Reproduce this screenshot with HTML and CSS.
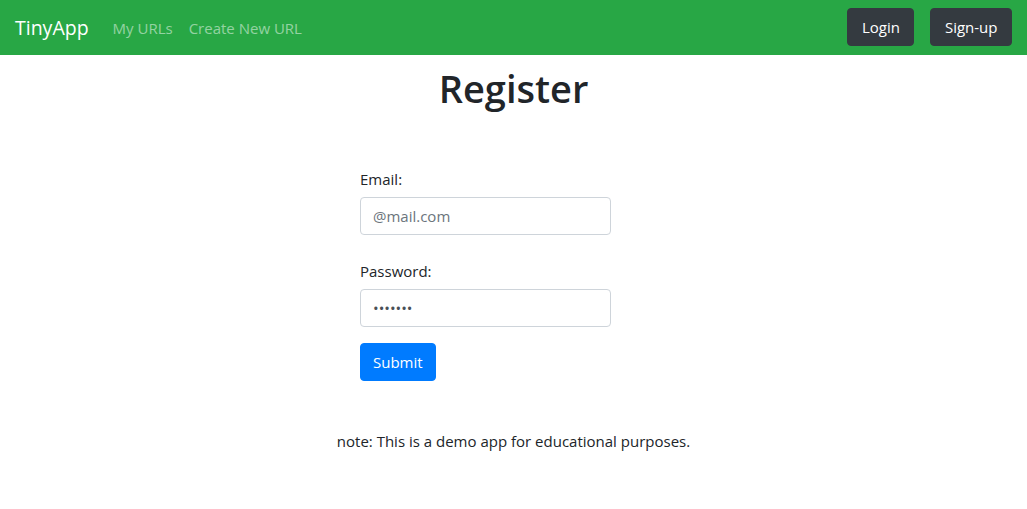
FILE: index.html
```html
<!DOCTYPE html>
<html lang="en">
<head>
<meta charset="utf-8">
<title>TinyApp - Register</title>
<link rel="stylesheet" href="styles.css">
</head>
<body>
<nav class="navbar">
  <div class="nav-left">
    <a class="brand" href="#">TinyApp</a>
    <a class="nav-link" href="#">My URLs</a>
    <a class="nav-link" href="#">Create New URL</a>
  </div>
  <div class="nav-right">
    <button class="btn btn-dark btn-nav">Login</button>
    <button class="btn btn-dark btn-nav">Sign-up</button>
  </div>
</nav>
<main class="main">
  <h1 class="title">Register</h1>
  <div class="form-wrap">
    <form class="form">
      <div class="form-group">
        <label class="label" for="email">Email:</label>
        <input class="input" id="email" type="email" placeholder="@mail.com">
      </div>
      <div class="form-group">
        <label class="label" for="password">Password:</label>
        <input class="input" id="password" type="password" value="1234567">
      </div>
      <button class="btn btn-primary" type="button">Submit</button>
    </form>
  </div>
  <p class="note">note: This is a demo app for educational purposes.</p>
</main>
</body>
</html>
```
FILE: styles.css
```css
* { box-sizing: border-box; }
html, body { margin: 0; padding: 0; }
body {
  font-family: "Open Sans", "Noto Sans", sans-serif;
  font-size: 15px;
  line-height: 24px;
  color: #212529;
  background: #fff;
}
.navbar {
  display: flex;
  justify-content: space-between;
  align-items: center;
  height: 55px;
  padding: 0 15px 0 15px;
  background: #28a745;
}
.nav-left { display: flex; align-items: center; }
.brand {
  color: #fff;
  font-size: 19.5px;
  text-decoration: none;
  margin-right: 16px;
}
.nav-link {
  color: rgba(255,255,255,0.5);
  text-decoration: none;
  padding: 0 8px;
}
.nav-right { display: flex; gap: 16px; margin-top: -1px; }
.btn {
  font-family: inherit;
  font-size: 15px;
  line-height: 24px;
  height: 38px;
  padding: 6px 12px;
  border: 1px solid transparent;
  border-radius: 4px;
  color: #fff;
  cursor: pointer;
}
.btn-nav { padding: 6px 13.5px; }
.btn-dark { background: #343a40; border-color: #343a40; }
.btn-primary { background: #007bff; border-color: #007bff; }
.main { display: flex; flex-direction: column; align-items: center; }
.title {
  margin: 9px 0 0;
  font-size: 38px;
  font-weight: 600;
  line-height: 48px;
}
.form-wrap { width: 307px; margin-top: 55px; }
.form { display: flex; flex-direction: column; align-items: flex-start; }
.form-group { display: flex; flex-direction: column; margin-bottom: 16px; }
.form-group + .form-group { margin-top: 8px; }
.label { margin-bottom: 6px; color: #212529; }
.input {
  width: 251px;
  height: 38px;
  padding: 6px 12px;
  font-family: inherit;
  font-size: 15px;
  color: #495057;
  border: 1px solid #ced4da;
  border-radius: 4px;
  background: #fff;
}
.input::placeholder { color: #6c757d; }
.note { margin: 48px 0 0; }
```
